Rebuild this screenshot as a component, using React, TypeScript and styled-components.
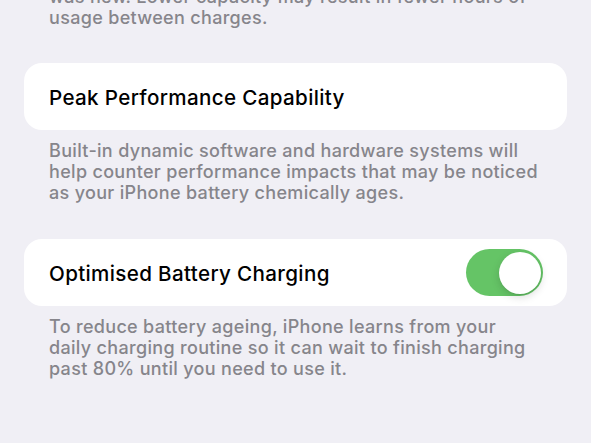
import React from "react";
import styled, { createGlobalStyle } from "styled-components";

const Global = createGlobalStyle`
  html, body { margin: 0; padding: 0; background: #f0eff5; }
  body { font-family: Inter, "Noto Sans", sans-serif; -webkit-font-smoothing: antialiased; overflow: hidden; }
`;

const Page = styled.div`
  width: 591px;
  height: 443px;
  overflow: hidden;
  background: #f0eff5;
`;

const Scroll = styled.div`
  display: flex;
  flex-direction: column;
  padding: 0 24px;
  margin-top: -14px;
`;

const Footer = styled.p<{ $after: number }>`
  margin: 0 0 ${(p) => p.$after}px;
  padding: 0 25px;
  font-size: 18px;
  font-weight: 500;
  line-height: 21px;
  color: #86858b;
  letter-spacing: 0.32px;
`;

const Card = styled.div`
  display: flex;
  align-items: center;
  justify-content: space-between;
  height: 67px;
  padding: 0 24px 0 25px;
  background: #ffffff;
  border-radius: 18px;
  margin-bottom: 10px;
`;

const Title = styled.span`
  font-size: 20.6px;
  font-weight: 500;
  color: #000;
  letter-spacing: 0.35px;
  padding-top: 1px;
`;

const Toggle = styled.div<{ $on: boolean }>`
  width: 77px;
  height: 47px;
  border-radius: 24px;
  background: ${(p) => (p.$on ? "#65c466" : "#e9e9ea")};
  display: flex;
  align-items: center;
  justify-content: ${(p) => (p.$on ? "flex-end" : "flex-start")};
  padding: 0 2.5px;
  box-sizing: border-box;
`;

const Knob = styled.div`
  width: 42px;
  height: 42px;
  border-radius: 50%;
  background: #fff;
  box-shadow: 0 3px 8px rgba(0, 0, 0, 0.15), 0 1px 1px rgba(0, 0, 0, 0.06);
`;

export default function App() {
  return (
    <Page>
      <Global />
      <Scroll>
        <Footer $after={35}>
          was new. Lower capacity may result in fewer hours of
          <br />
          usage between charges.
        </Footer>
        <Card>
          <Title>Peak Performance Capability</Title>
        </Card>
        <Footer $after={36}>
          Built-in dynamic software and hardware systems will
          <br />
          help counter performance impacts that may be noticed
          <br />
          as your iPhone battery chemically ages.
        </Footer>
        <Card>
          <Title>Optimised Battery Charging</Title>
          <Toggle $on>
            <Knob />
          </Toggle>
        </Card>
        <Footer $after={0}>
          To reduce battery ageing, iPhone learns from your
          <br />
          daily charging routine so it can wait to finish charging
          <br />
          past 80% until you need to use it.
        </Footer>
      </Scroll>
    </Page>
  );
}
